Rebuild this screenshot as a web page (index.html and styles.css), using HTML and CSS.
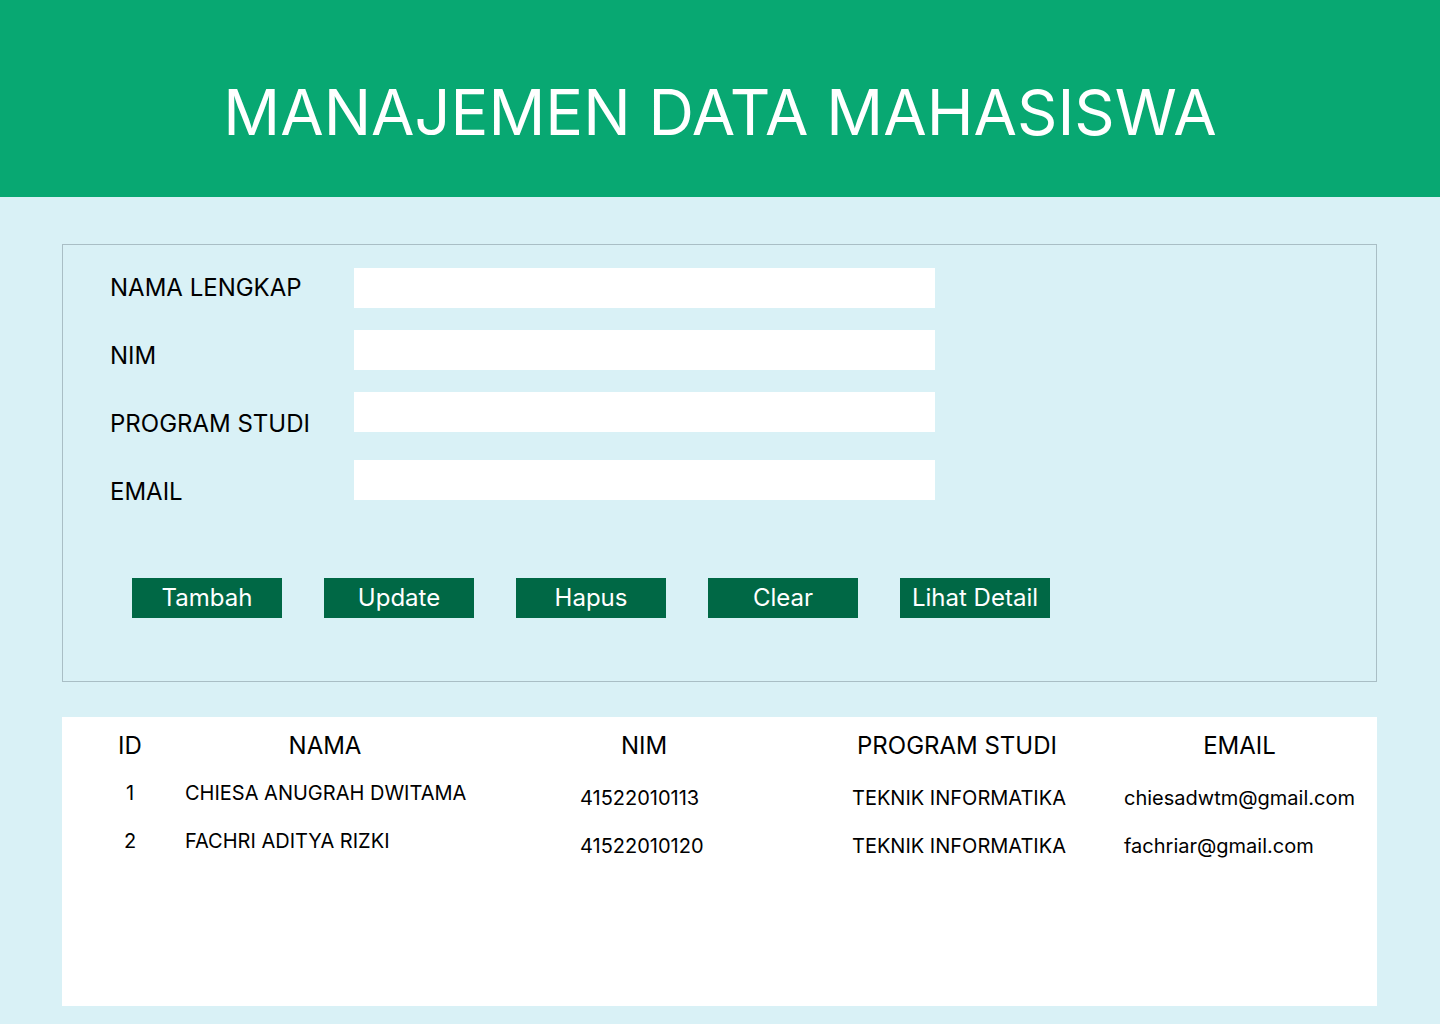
FILE: index.html
```html
<!DOCTYPE html>
<html lang="id">
<head>
<meta charset="utf-8">
<title>Manajemen Data Mahasiswa</title>
<link rel="stylesheet" href="styles.css">
</head>
<body>
<header class="topbar">
  <h1 class="title">MANAJEMEN DATA MAHASISWA</h1>
</header>
<main class="content">
  <section class="form-panel">
    <div class="fields">
      <div class="labels">
        <label class="label">NAMA LENGKAP</label>
        <label class="label">NIM</label>
        <label class="label">PROGRAM STUDI</label>
        <label class="label">EMAIL</label>
      </div>
      <div class="inputs">
        <input class="input" type="text">
        <input class="input" type="text">
        <input class="input" type="text">
        <input class="input input-last" type="text">
      </div>
    </div>
    <div class="actions">
      <button class="btn">Tambah</button>
      <button class="btn">Update</button>
      <button class="btn">Hapus</button>
      <button class="btn">Clear</button>
      <button class="btn">Lihat Detail</button>
    </div>
  </section>
  <section class="table-panel">
    <div class="thead">
      <div class="th th-id">ID</div>
      <div class="th th-nama">NAMA</div>
      <div class="th th-nim">NIM</div>
      <div class="th th-prodi">PROGRAM STUDI</div>
      <div class="th th-email">EMAIL</div>
    </div>
    <div class="tbody">
      <div class="tr">
        <div class="td td-id">1</div>
        <div class="td">CHIESA ANUGRAH DWITAMA</div>
        <div class="td td-low">41522010113</div>
        <div class="td td-low">TEKNIK INFORMATIKA</div>
        <div class="td td-low">chiesadwtm@gmail.com</div>
      </div>
      <div class="tr">
        <div class="td td-id">2</div>
        <div class="td">FACHRI ADITYA RIZKI</div>
        <div class="td td-low">41522010120</div>
        <div class="td td-low">TEKNIK INFORMATIKA</div>
        <div class="td td-low">fachriar@gmail.com</div>
      </div>
    </div>
  </section>
</main>
</body>
</html>
```
FILE: styles.css
```css
* { box-sizing: border-box; }
html, body { margin: 0; padding: 0; }
body {
  background: #d9f1f6;
  font-family: Inter, "Noto Sans", sans-serif;
  color: #000;
  width: 1440px;
  height: 1024px;
  overflow: hidden;
}
.topbar {
  height: 197px;
  background: #08a872;
  padding-top: 81px;
}
.title {
  margin: 0;
  text-align: center;
  color: #fff;
  font-weight: 400;
  font-size: 63px;
  line-height: 63px;
}
.content {
  padding: 47px 63px 0 62px;
}
.form-panel {
  border: 1px solid #a9bec5;
  height: 438px;
  padding: 23px 0 0 47px;
}
.fields {
  display: flex;
  align-items: flex-start;
}
.labels {
  width: 244px;
  display: flex;
  flex-direction: column;
  gap: 28px;
}
.label {
  font-size: 24px;
  line-height: 40px;
}
.inputs {
  display: flex;
  flex-direction: column;
  gap: 22px;
}
.input {
  width: 581px;
  height: 40px;
  border: none;
  background: #fff;
  margin: 0;
  padding: 0 10px;
  font: inherit;
}
.input-last { margin-top: 6px; }
.actions {
  display: flex;
  gap: 42px;
  margin-top: 66px;
  padding-left: 22px;
}
.btn {
  width: 150px;
  height: 40px;
  background: #006845;
  color: #fff;
  border: none;
  padding: 0;
  font-family: Inter, "Noto Sans", sans-serif;
  font-size: 24px;
  line-height: 40px;
  white-space: nowrap;
}
.table-panel {
  margin-top: 35px;
  background: #fff;
  height: 289px;
}
.thead {
  display: grid;
  grid-template-columns: 136px 254px 384px 242px 299px;
  padding-top: 9px;
  font-size: 24px;
  line-height: 39px;
  text-align: center;
}
.th-email { padding-left: 24px; }
.tbody { padding-top: 4px; }
.tr {
  display: grid;
  grid-template-columns: 123px 395px 272px 272px 253px;
  font-size: 20px;
  line-height: 48px;
  white-space: nowrap;
}
.td-id {
  text-align: center;
  padding-left: 13px;
}
.td-low {
  padding-top: 10px;
  line-height: 38px;
}
```
